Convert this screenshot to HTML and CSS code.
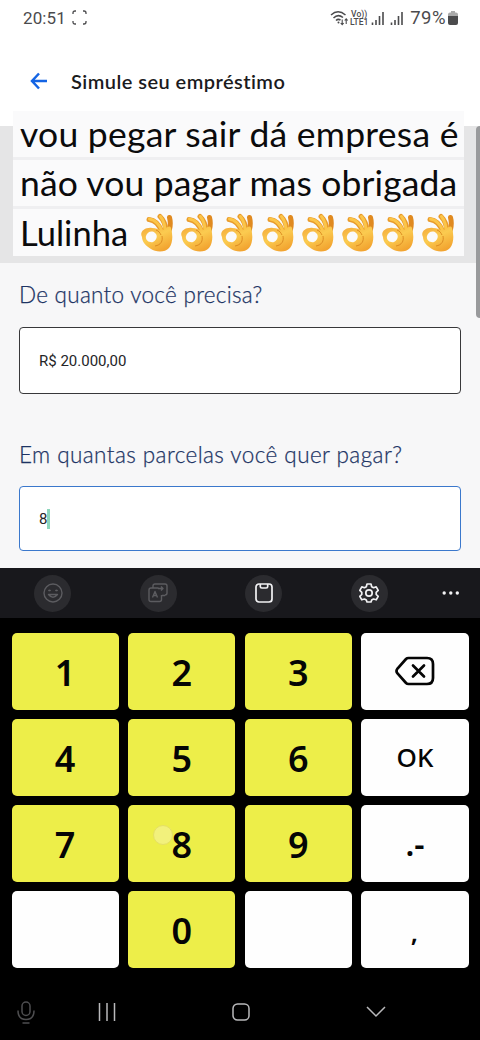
FILE: index.html
```html
<!DOCTYPE html>
<html lang="pt-BR">
<head>
<meta charset="utf-8">
<meta name="viewport" content="width=device-width">
<title>Simule seu empréstimo</title>
<link rel="stylesheet" href="styles.css">
</head>
<body>
<svg width="0" height="0" class="defs" aria-hidden="true">
  <defs>
    <linearGradient id="skin" x1="0" y1="0" x2="0.6" y2="1">
      <stop offset="0" stop-color="#f3a83a"/>
      <stop offset="0.5" stop-color="#fbcb50"/>
      <stop offset="1" stop-color="#f2a430"/>
    </linearGradient>
    <symbol id="ok-hand" viewBox="0 0 34 40">
      <g fill="none" stroke-linecap="round">
        <path d="M29.500 4.500C31 10 30.500 16 27 23" stroke="#e08a20" stroke-width="5"/>
        <path d="M20 3.500C24.500 8 26.500 14 25 22" stroke="#e99b2b" stroke-width="5"/>
        <path d="M20.500 3.500C24 8 25.500 13 24.500 20" stroke="#fbc549" stroke-width="3"/>
        <path d="M9 6.500C14.500 7 19 11 22 19" stroke="#e99b2b" stroke-width="5"/>
        <path d="M9.500 6C15 7 18.500 10 21.500 17" stroke="#fbc549" stroke-width="3"/>
      </g>
      <path fill="url(#skin)" fill-rule="evenodd" d="M2 24C-1 19 5 14 12 15c5 0 8 3 11 2 4-3 7-5 8-2 2 7 2 15-2 20-4 5-14 4-18 1C6 33 2 29 2 24ZM6 23c-1 4 3 7 7 6 4-2 5-7 2-9-3-3-8-1-9 3Z"/>
      <path d="M15 33c6-1 8-5 7-10M16 17c3 1 4 3 5 5" fill="none" stroke="#dc8b22" stroke-width="1"/>
    </symbol>
  </defs>
</svg>
<div class="screen">
  <div class="status">
    <span class="clock">20:51</span>
    <svg class="frame" width="16" height="16" viewBox="0 0 16 16"><path d="M1 4V3q0-2 2-2h1M11 1h1q2 0 2 2v1M14 11v1q0 2-2 2h-1M4 14H3q-2 0-2-2v-1"/></svg>
    <div class="status-right">
      <svg class="wifi" width="20" height="16" viewBox="0 0 20 16"><path d="M1 5Q8-1.500 15.500 5M3.500 8Q8 3.500 13 7.500M6 10.500Q8 8.500 10.500 10"/><circle cx="8.500" cy="12.500" r="1"/><path class="thin" d="M12.200 9.500v5M10.700 13l1.500 1.700 1.500-1.700M16.200 14V9M14.700 10.500l1.500-1.700 1.500 1.700"/></svg>
      <span class="volte"><span>Vo))</span><span>LTE1</span></span>
      <svg class="bars" width="14" height="14" viewBox="0 0 14 14"><path d="M1.500 14v-2.500M5 14V9M8.500 14V5M12 14V1"/></svg>
      <svg class="bars second" width="14" height="14" viewBox="0 0 14 14"><path d="M1.500 14v-2.500M5 14V9M8.500 14V5M12 14V1"/></svg>
      <span class="percent">79%</span>
      <svg class="battery" width="10" height="14" viewBox="0 0 10 14"><path fill="#aaa" d="M3 0h4v1.500h1q2 0 2 2V6H0V3.500q0-2 2-2h1z"/><path fill="#4b4b4d" d="M0 5h10v7q0 2-2 2H2q-2 0-2-2z"/></svg>
    </div>
  </div>
  <header class="appbar">
    <svg width="18" height="18" viewBox="0 0 18 18"><path d="M17 9H2.500M9 1.500 2 9l7 7.500"/></svg>
    <h1>Simule seu empréstimo</h1>
  </header>
  <main class="content">
    <section class="banner">
      <div class="caption">
        <p class="l1">vou pegar sair dá empresa é</p>
        <p class="l2">não vou pagar mas obrigada</p>
        <p class="l3"><span>Lulinha</span><span class="hands"><svg><use href="#ok-hand"/></svg><svg><use href="#ok-hand"/></svg><svg><use href="#ok-hand"/></svg><svg><use href="#ok-hand"/></svg><svg><use href="#ok-hand"/></svg><svg><use href="#ok-hand"/></svg><svg><use href="#ok-hand"/></svg><svg><use href="#ok-hand"/></svg></span></p>
      </div>
    </section>
    <div class="scrollbar"></div>
    <div class="form">
      <label class="q1">De quanto você precisa?</label>
      <div class="field amount">R$ 20.000,00</div>
      <label class="q2">Em quantas parcelas você quer pagar?</label>
      <div class="field active">8<i class="caret"></i></div>
    </div>
  </main>
  <div class="toolbar">
    <span class="tool dim"><svg width="20" height="20" viewBox="0 0 20 20"><circle cx="10" cy="10" r="9"/><path d="M5.500 11.500q4.500 5.500 9 0zM5.500 8q1-1.500 2 0M12.500 8q1-1.500 2 0"/></svg></span>
    <span class="tool dim"><svg width="20" height="20" viewBox="0 0 20 20"><path d="M5 5V3q0-2 2-2h10q2 0 2 2v7q0 2-2 2M3 5h7.500M13.500 12v4.500q0 2-2 2H3q-2 0-2-2V7q0-2 2-2M4.500 14.500l2.500-6 2.500 6M5.300 12.500h3.400M10 5.500h5m-2-2 2 2-2 2M17 12.500h-3"/></svg></span>
    <span class="tool"><svg width="20" height="20" viewBox="0 0 20 20"><rect x="2" y="1" width="16" height="18" rx="3"/><path d="M6.300 1v2.500q0 1.500 1.500 1.500h4.400q1.500 0 1.500-1.500V1"/></svg></span>
    <span class="tool"><svg width="20" height="20" viewBox="0 0 20 20"><path d="M8 1h4l.7 2.700 1.800 1 2.700-.8 2 3.500-2 1.900v2.100l2 1.900-2 3.500-2.700-.8-1.800 1L12 19H8l-.7-2-1.800-1-2.700.8-2-3.500 2-1.900V9.300l-2-1.900 2-3.500 2.700.8 1.800-1z"/><circle cx="10" cy="10" r="3.200"/></svg></span>
    <svg class="more" width="18" height="4" viewBox="0 0 18 4"><circle cx="2.200" cy="2" r="1.700"/><circle cx="8.800" cy="2" r="1.700"/><circle cx="15.300" cy="2" r="1.700"/></svg>
  </div>
  <div class="keypad">
    <div class="key num">1</div><div class="key num">2</div><div class="key num">3</div>
    <div class="key"><svg width="40" height="30" viewBox="0 0 40 30"><path d="M13.500 2H32q6 0 6 6v14q0 6-6 6H13.500q-1.500 0-2.500-1L2.500 17.500q-2-2.500 0-5L11 3q1-1 2.500-1z"/><path d="M18 9.500 29 20.500M29 9.500 18 20.500"/></svg></div>
    <div class="key num">4</div><div class="key num">5</div><div class="key num">6</div><div class="key ok">OK</div>
    <div class="key num">7</div><div class="key num"><i class="touch"></i><span>8</span></div><div class="key num">9</div><div class="key sym">.-</div>
    <div class="key"></div><div class="key num">0</div><div class="key"></div><div class="key comma">,</div>
  </div>
  <nav class="navbar">
    <svg class="mic" width="18" height="23" viewBox="0 0 18 23"><rect x="5" y="1" width="8" height="13.500" rx="4"/><path d="M1 9.500q0 9 8 9t8-9M5.500 22h7"/></svg>
    <svg class="recents" width="18" height="18" viewBox="0 0 18 18"><path d="M1.500 0v18M9 0v18M16.500 0v18"/></svg>
    <svg class="home" width="18" height="18" viewBox="0 0 18 18"><rect x="1" y="1" width="16" height="16" rx="4.500"/></svg>
    <svg class="hide" width="20" height="12" viewBox="0 0 20 12"><path d="m1 1 9 9 9-9"/></svg>
  </nav>
</div>
</body>
</html>
```

FILE: styles.css
```css
* { box-sizing: border-box; }
body { margin: 0; background: #000; }
svg { fill: none; display: block; flex: none; }
.defs { position: absolute; }
.screen { width: 480px; height: 1040px; display: flex; flex-direction: column; background: #fff; overflow: hidden; }

.status { height: 36px; padding: 0 22px 0 23px; display: flex; align-items: center; color: #4b4b4d; font-family: Roboto, sans-serif; }
.clock { font-size: 17px; letter-spacing: 0.1px; }
.frame { margin-left: 6px; stroke: #4b4b4d; stroke-width: 1.3; }
.status-right { margin-left: auto; display: flex; align-items: center; }
.wifi { stroke: #4b4b4d; stroke-width: 1.5; }
.wifi circle { fill: #4b4b4d; stroke: none; }
.wifi .thin { stroke-width: 1.1; }
.volte { display: flex; flex-direction: column; align-items: center; font-size: 8.500px; line-height: 8px; font-weight: 500; width: 18px; }
.bars { margin-left: 3px; stroke: #4b4b4d; stroke-width: 1.6; }
.second { margin-left: 5px; }
.percent { font-size: 18.500px; margin-left: 6px; letter-spacing: 0.500px; }
.battery { margin-left: 2px; }

.appbar { height: 90px; display: flex; align-items: center; padding: 0 30px; gap: 23px; }
.appbar svg { stroke: #1464e4; stroke-width: 2.500; }
.appbar h1 { margin: 0; font: 600 20px Lato, sans-serif; letter-spacing: 0.450px; color: #1b1b1d; }

.content { height: 442px; background: #f7f7f8; position: relative; }
.banner { height: 137px; background: #e5e5e6; position: relative; }
.caption { position: absolute; left: 13px; top: -15px; width: 451px; display: grid; grid-template-rows: 46px 46px 47px; gap: 3px; background: #efeff1; }
.caption p { margin: 0; padding-left: 7px; background: #fafafb; font: 35.500px/46px Lato, sans-serif; color: #0b0b0c; white-space: nowrap; display: flex; align-items: center; }
.caption .l1 { letter-spacing: 0.250px; }
.caption .l2 { letter-spacing: 0.130px; }
.caption .l3 { font-size: 34.500px; }
.hands { display: flex; gap: 6.200px; margin-left: 12px; }
.hands svg { width: 34px; height: 40px; }
.scrollbar { position: absolute; right: 0; top: 0; width: 4px; height: 192px; background: #999a9c; border-radius: 4px 0 0 4px; }

.form { display: flex; flex-direction: column; padding: 0 19px; }
label { font: 300 22.500px/26px Lato, sans-serif; color: #1d3464; -webkit-text-stroke: 0.250px #1d3464; white-space: nowrap; }
.q1 { margin-top: 19px; letter-spacing: 0.280px; }
.q2 { margin-top: 48px; letter-spacing: 0.430px; }
.field { margin-top: 18px; height: 68px; background: #fff; border: 1.500px solid #38383a; border-radius: 4px; padding: 0 19px; display: flex; align-items: center; font: 15px Roboto, sans-serif; color: #252528; }
.amount { margin-top: 19px; height: 67px; }
.active { height: 65px; border-color: #3b78cc; }
.caret { width: 3px; height: 20px; background: #8dd6bc; }

.toolbar { height: 50px; background: #18181c; display: flex; align-items: center; padding-left: 34px; gap: 68.500px; }
.tool { width: 37px; height: 37px; border-radius: 50%; background: #2b2b2f; display: grid; place-items: center; }
.tool svg { stroke: #f2f2f4; stroke-width: 1.700; stroke-linejoin: round; }
.dim svg { stroke: #5c5c60; stroke-width: 1.400; }
.more { fill: #f2f2f4; margin-left: -14px; }

.keypad { height: 350px; background: #000; padding: 15px 11.500px 0; display: grid; grid-template-columns: repeat(4, 1fr); grid-auto-rows: 76.500px; gap: 9.600px; }
.key { background: #fefefe; border-radius: 5px; display: flex; align-items: center; justify-content: center; font-family: Inter, sans-serif; color: #050505; position: relative; }
.key svg { stroke: #050505; stroke-width: 2.700; stroke-linecap: round; }
.num { background: #edee49; font: 600 36px "Noto Sans", sans-serif; padding-top: 2px; }
.num span { position: relative; }
.touch { position: absolute; left: 25px; top: 20px; width: 20px; height: 20px; border-radius: 50%; background: #f2f17c; border: 1px solid #e5df65; }
.ok { font: 500 26px "Noto Sans", sans-serif; }
.sym { font: 600 32px "Noto Sans", sans-serif; }
.comma { font: 600 26px "Noto Sans", sans-serif; padding-top: 5px; padding-right: 1px; }

.navbar { height: 72px; background: #000; display: flex; align-items: center; padding: 16px 0 0 17px; }
.navbar svg { stroke: #b9b9bb; stroke-width: 1.500; }
.navbar .mic { stroke: #4e4e50; }
.recents { margin-left: 63px; }
.home, .hide { margin-left: 116px; }
```
